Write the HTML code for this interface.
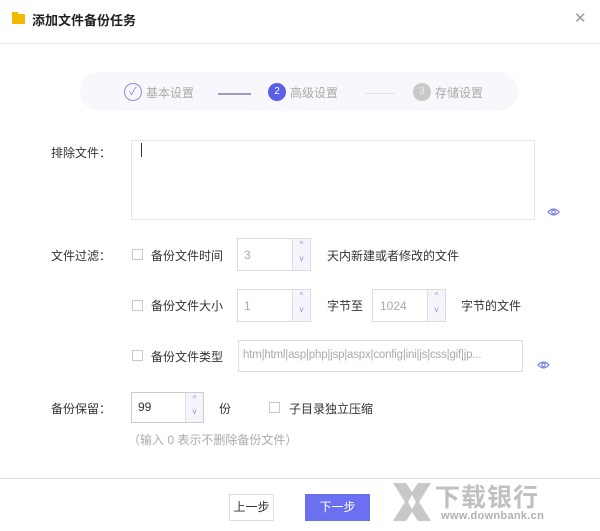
<!DOCTYPE html>
<html><head><meta charset="utf-8"><style>
*{box-sizing:border-box;margin:0;padding:0}
body{width:600px;height:531px;background:#fff;font-family:"Liberation Sans","Noto Sans CJK SC",sans-serif;font-size:12px;color:#333;position:relative;overflow:hidden}
.a{position:absolute;white-space:nowrap}
.box{position:absolute;border:1px solid #dcdce6;background:#fff}
.spin{position:absolute;right:0;top:0;bottom:0;width:18px;border-left:1px solid #e0e0ea;background:#f4f4fa}
.spin i{position:absolute;left:0;right:0;height:50%;font-style:normal;font-size:8px;color:#8a8fd8;text-align:center}
.cb{position:absolute;width:11px;height:11px;border:1px solid #c8c8d0;background:#fff}
.gray{color:#aaa}
</style></head><body>
<div class="a" style="left:12px;top:14px;width:13px;height:10px;background:#f5b800;border-radius:1px"></div>
<div class="a" style="left:12px;top:12px;width:6px;height:3px;background:#f5b800"></div>
<div class="a" style="left:32px;top:10px;font-size:13px;font-weight:bold;color:#222">添加文件备份任务</div>
<div class="a" style="left:574px;top:9px;font-size:15px;color:#999">✕</div>
<div class="a" style="left:0;top:43px;width:600px;height:1px;background:#e8e8ee"></div>

<div class="a" style="left:80px;top:72px;width:438px;height:39px;background:#f7f7fc;border-radius:20px"></div>
<div class="a" style="left:124px;top:83px;width:18px;height:18px;border:1px solid #8a8fd8;border-radius:50%;color:#8a8fd8;font-size:11px;text-align:center;line-height:16px">✓</div>
<div class="a gray" style="left:146px;top:84px">基本设置</div>
<div class="a" style="left:218px;top:93px;width:33px;height:2px;background:#9a9ac8"></div>
<div class="a" style="left:268px;top:83px;width:18px;height:18px;background:#5a5ee8;border-radius:50%;color:#fff;font-size:10px;text-align:center;line-height:18px">2</div>
<div class="a gray" style="left:290px;top:84px">高级设置</div>
<div class="a" style="left:365px;top:93px;width:30px;height:1px;background:#e0e0e8"></div>
<div class="a" style="left:413px;top:83px;width:18px;height:18px;background:#c8c8c8;border-radius:50%;color:#eee;font-size:10px;text-align:center;line-height:18px">3</div>
<div class="a gray" style="left:435px;top:84px">存储设置</div>

<div class="a" style="left:51px;top:144px">排除文件：</div>
<div class="box" style="left:131px;top:140px;width:404px;height:80px;border-color:#e4e4ee"></div>
<div class="a" style="left:141px;top:143px;width:1px;height:14px;background:#333"></div>
<svg class="a" style="left:547px;top:207px" width="13" height="10" viewBox="0 0 13 10"><path d="M1 5 Q6.5 -1 12 5 Q6.5 11 1 5 Z" fill="none" stroke="#7a7fe0" stroke-width="1.2"/><circle cx="6.5" cy="5" r="1.8" fill="none" stroke="#7a7fe0" stroke-width="1.2"/></svg>

<div class="a" style="left:51px;top:247px">文件过滤：</div>
<div class="cb" style="left:132px;top:249px"></div>
<div class="a" style="left:151px;top:247px">备份文件时间</div>
<div class="box" style="left:237px;top:238px;width:74px;height:33px"><span class="a gray" style="left:6px;top:9px">3</span><div class="spin"><i style="top:1px">^</i><i style="bottom:1px">v</i></div></div>
<div class="a" style="left:327px;top:247px">天内新建或者修改的文件</div>

<div class="cb" style="left:132px;top:300px"></div>
<div class="a" style="left:151px;top:297px">备份文件大小</div>
<div class="box" style="left:237px;top:289px;width:74px;height:33px"><span class="a gray" style="left:6px;top:9px">1</span><div class="spin"><i style="top:1px">^</i><i style="bottom:1px">v</i></div></div>
<div class="a" style="left:327px;top:297px">字节至</div>
<div class="box" style="left:372px;top:289px;width:74px;height:33px"><span class="a gray" style="left:7px;top:9px">1024</span><div class="spin"><i style="top:1px">^</i><i style="bottom:1px">v</i></div></div>
<div class="a" style="left:461px;top:297px">字节的文件</div>

<div class="cb" style="left:132px;top:350px"></div>
<div class="a" style="left:151px;top:348px">备份文件类型</div>
<div class="box" style="left:238px;top:340px;width:285px;height:32px"><span class="a gray" style="left:4px;top:8px;font-size:11.5px;letter-spacing:-0.2px">htm|html|asp|php|jsp|aspx|config|ini|js|css|gif|jp...</span></div>
<svg class="a" style="left:537px;top:360px" width="13" height="10" viewBox="0 0 13 10"><path d="M1 5 Q6.5 -1 12 5 Q6.5 11 1 5 Z" fill="none" stroke="#7a7fe0" stroke-width="1.2"/><circle cx="6.5" cy="5" r="1.8" fill="none" stroke="#7a7fe0" stroke-width="1.2"/></svg>

<div class="a" style="left:51px;top:400px">备份保留：</div>
<div class="box" style="left:131px;top:392px;width:73px;height:31px;border-color:#ccc"><span class="a" style="left:6px;top:7px">99</span><div class="spin"><i style="top:1px">^</i><i style="bottom:1px">v</i></div></div>
<div class="a" style="left:219px;top:400px">份</div>
<div class="cb" style="left:269px;top:402px"></div>
<div class="a" style="left:289px;top:400px">子目录独立压缩</div>
<div class="a gray" style="left:128px;top:431px">（输入 0 表示不删除备份文件）</div>

<div class="a" style="left:0;top:478px;width:600px;height:1px;background:#e0e0e6"></div>
<div class="a" style="left:229px;top:494px;width:45px;height:27px;border:1px solid #dcdce4;text-align:center;line-height:25px;background:#fff">上一步</div>
<div class="a" style="left:305px;top:494px;width:65px;height:27px;background:#6a70f0;color:#fff;text-align:center;line-height:27px">下一步</div>

<svg class="a" style="left:392px;top:482px" width="40" height="40" viewBox="0 0 40 40"><path d="M1 1 L14 1 L20 10 L26 1 L39 1 L27 20 L39 39 L26 39 L20 30 L14 39 L1 39 L13 20 Z" fill="#c8c8c8"/><path d="M16 20 L20 13 L24 20 L20 27 Z" fill="#fff"/></svg>
<div class="a" style="left:435px;top:478px;font-size:25px;color:#c0c0c0;font-weight:bold;letter-spacing:1px">下载银行</div>
<div class="a" style="left:441px;top:510px;font-size:11px;color:#b0b0b0;font-weight:bold;letter-spacing:0.3px">www.downbank.cn</div>
</body></html>
